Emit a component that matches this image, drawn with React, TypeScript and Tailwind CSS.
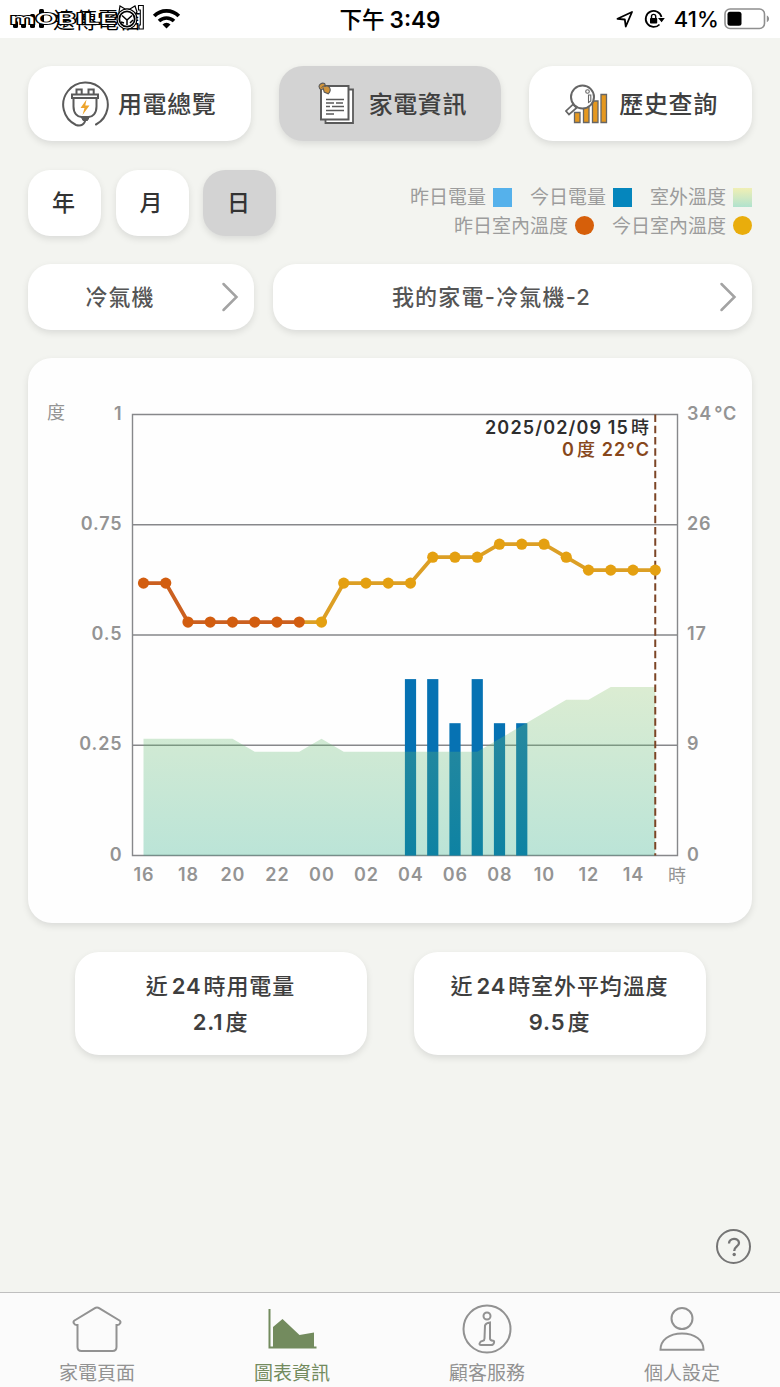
import type { ReactNode } from "react";
import clsx from "clsx";

const START_X = 143.5;
const STEP = 22.25;
const TOP = 414.5;
const BOTTOM = 855.5;
const HEIGHT = BOTTOM - TOP;
const MAX_TEMP = 34;

const INDOOR = [21, 21, 18, 18, 18, 18, 18, 18, 18, 21, 21, 21, 21, 23, 23, 23, 24, 24, 24, 23, 22, 22, 22, 22];
const OUTDOOR = [9, 9, 9, 9, 9, 8, 8, 8, 9, 8, 8, 8, 8, 8, 8, 8, 9, 10, 11, 12, 12, 13, 13, 13];
const USAGE = [0, 0, 0, 0, 0, 0, 0, 0, 0, 0, 0, 0, 0.4, 0.4, 0.3, 0.4, 0.3, 0.3, 0, 0, 0, 0, 0, 0];
const HOURS = ["16", "18", "20", "22", "00", "02", "04", "06", "08", "10", "12", "14"];
const LEFT_AXIS = ["1", "0.75", "0.5", "0.25", "0"];
const RIGHT_AXIS = ["34", "26", "17", "9", "0"];

// points before midnight belong to yesterday
const YESTERDAY_COUNT = 8;

const px = (i: number) => START_X + i * STEP;
const tempY = (t: number) => BOTTOM - (t / MAX_TEMP) * HEIGHT;
const toPoints = (values: number[], offset = 0) =>
  values.map((v, i) => `${px(i + offset)},${tempY(v)}`).join(" ");

function StatusBar() {
  return (
    <header className="relative flex h-[38px] items-center justify-between bg-white pl-[9px] pr-[10px] text-black">
      <div className="flex items-center">
        <svg width="136" height="34" viewBox="9 2 136 34">
          <rect x="13" y="21" width="5" height="7" rx="1.5" />
          <rect x="21" y="18" width="5" height="10" rx="1.5" />
          <rect x="30" y="14" width="5" height="14" rx="1.5" />
          <rect x="39" y="9" width="5" height="19" rx="1.5" />
          <text x="53" y="28" fontSize="22" textLength="88" className="font-['Noto_Sans_CJK_TC',sans-serif]">
            遠傳電信
          </text>
          <text
            x="10"
            y="23.500"
            fontSize="14"
            fontWeight="500"
            textLength="107"
            lengthAdjust="spacingAndGlyphs"
            fill="#fff"
            stroke="#000"
            strokeWidth="1.800"
            paintOrder="stroke"
            className="font-['Inter',sans-serif]"
          >
            mOBILE
          </text>
          <path d="M119 12l1-6 5 3h5l5-3 2 6-2 2-16 1z" fill="#fff" stroke="#000" strokeWidth="1.200" />
          <circle cx="127" cy="19" r="10" fill="#fff" stroke="#000" strokeWidth="1.200" />
          <circle cx="127" cy="19" r="7.700" fill="#fff" stroke="#000" strokeWidth="1.800" />
          <path d="M122 15.500l5 4.500 5-4.500M127 20v5M121 22l3 1M133 20l-3 3" fill="none" stroke="#000" strokeWidth="1.500" />
          <path d="M138.500 5.500h4.800v23.500h-4.300v-4h1.300V10h-1.800z" fill="#fff" stroke="#000" strokeWidth="1.100" />
        </svg>
        <svg className="mt-[-2px] ml-[7px]" width="29" height="21" viewBox="0 0 29 21">
          <path d="M2.200 8a17.500 17.500 0 0 1 24.600 0" fill="none" stroke="#000" strokeWidth="3.800" />
          <path d="M7 13a10.800 10.800 0 0 1 15 0" fill="none" stroke="#000" strokeWidth="3.600" />
          <path d="M10.500 16.500a5.700 5.700 0 0 1 8 0l-4 4z" />
        </svg>
      </div>
      <div className="absolute inset-x-0 top-px flex h-[38px] items-center justify-center gap-[5px] text-[22.500px] font-semibold">
        <span className="font-medium">下午</span>
        <span>3:49</span>
      </div>
      <div className="flex items-center">
        <svg width="18" height="18" viewBox="0 0 18 18" fill="none" stroke="#000" strokeWidth="1.800" strokeLinejoin="round">
          <path d="M1.500 8.800 16 2 9.800 16.500 8.800 9.500z" />
        </svg>
        <svg className="ml-2.5" width="21" height="20" viewBox="0 0 21 20">
          <path d="M15.500 15.500A8 8 0 1 1 17.500 8" fill="none" stroke="#000" strokeWidth="1.800" />
          <path d="M14 9h6.800l-3.200 4.300z" />
          <rect x="6" y="9" width="7.200" height="5.500" rx="0.800" />
          <path d="M7.500 9.500V7.500a2.100 2.100 0 0 1 4.200 0v2" fill="none" stroke="#000" strokeWidth="1.400" />
        </svg>
        <span className="mt-px ml-[9px] text-[22px] font-[450] tracking-[0.1px]">41%</span>
        <svg className="ml-[5px]" width="46" height="22" viewBox="0 0 46 22">
          <rect x="1" y="1" width="39.500" height="19.500" rx="5" fill="none" stroke="#8f8f8f" strokeWidth="1.600" />
          <rect x="3.500" y="3.800" width="14" height="14" rx="2.500" />
          <path d="M42.800 7.500c3 1.200 3 5.500 0 6.700z" fill="#8f8f8f" />
        </svg>
      </div>
    </header>
  );
}

function PlugIcon() {
  return (
    <svg width="48" height="48" viewBox="0 0 48 48" fill="none" stroke="#5a5a5a" strokeWidth="2">
      <path d="M35 44.500A22.300 22.300 0 1 0 15 45c5 1.500 9-.500 9.500-6" strokeLinecap="round" />
      <path d="M12.500 18v8.500c0 7 4 10.500 8 10.500h7c4 0 8-3.500 8-10.500V18" />
      <rect x="11" y="14.500" width="26" height="3.500" />
      <path d="M15.500 14.500V9.500h5.200v5M27.500 14.500V9.500h5.200v5" />
      <path d="M20.500 37.500h7.500l-1.500 3h-4.500z" fill="#5a5a5a" strokeWidth="1" />
      <path d="M25.500 19.500l-6 8.500h4l-2 7 7-9.500h-4.200z" fill="#eda42b" stroke="none" />
    </svg>
  );
}

function NoteIcon() {
  return (
    <svg width="38" height="44" viewBox="0 0 38 44" stroke="#5a5a5a">
      <path d="M7.500 7.500h27.500v33.500H7.500z" fill="#fff" strokeWidth="1.800" />
      <path d="M3 4h27.500v33.500H3z" fill="#fff" strokeWidth="2" />
      <path d="M8 17.500h18M8 21h8M18 21h7M8 24.500h4M14 24.500h12M8 28.500h18M8 32h8" strokeWidth="1.500" />
      {/* push pin */}
      <path
        d="M1 4.500C1 2 4 .500 6.500 1.500c1 .800.600 2.300-.200 3 1.500-.800 4-.700 5.200 1 1.500 2.300.500 4.500-1.300 6.300l-4-1.800-1-3.500C3.500 8.500 1.500 7.500 1 4.500z"
        fill="#d0933a"
        strokeWidth="1.100"
      />
      <path d="M3.500 5.500l3-2" strokeWidth="1" />
    </svg>
  );
}

function HistoryIcon() {
  return (
    <svg width="43" height="40" viewBox="0 0 43 40" stroke="#666" strokeWidth="1.300">
      <g fill="#e5981f">
        <path d="M9.500 28.500h5.500v10h-5.500zM18.500 21h5.500v17.500h-5.500zM27.500 17h5.500v21.500h-5.500zM36 10.500h5.500v28H36z" />
      </g>
      <path d="M8 20.500l3.500 3.500-7.500 6.500-3-3.500z" fill="#fff" strokeWidth="1.700" />
      <circle cx="17.500" cy="13" r="11.500" fill="#fff" strokeWidth="2" />
      <circle cx="22.500" cy="7.500" r="1.800" fill="#fff" strokeWidth="1.100" />
      <path d="M23.500 11h2.300v6l-2.300 1.500z" fill="#fff" strokeWidth="1.100" />
    </svg>
  );
}

function TopTab({ icon, label, active }: { icon: ReactNode; label: string; active?: boolean }) {
  return (
    <button
      className={clsx(
        "flex h-[75px] flex-1 items-center rounded-3xl text-[24px] font-medium tracking-[0.6px] text-[#404040] shadow-[0_3px_7px_rgba(0,0,0,0.1)]",
        active ? "bg-[#d3d3d3]" : "bg-white"
      )}
    >
      <span className="flex w-[90px] shrink-0 justify-end">{icon}</span>
      <span className="flex-1 pt-0.5 text-left">{label}</span>
    </button>
  );
}

function PeriodButton({ label, active }: { label: string; active?: boolean }) {
  return (
    <button
      className={clsx(
        "h-[66px] w-[73px] rounded-[22px] pr-0.5 text-[23px] font-medium text-[#333] shadow-[0_3px_7px_rgba(0,0,0,0.1)]",
        active ? "bg-[#d3d3d3]" : "bg-white"
      )}
    >
      {label}
    </button>
  );
}

function LegendItem({ label, swatch }: { label: string; swatch: string }) {
  return (
    <div className="flex items-center gap-[7px]">
      <span className="pt-0.5">{label}</span>
      <i className={clsx("block size-[19px]", swatch)} />
    </div>
  );
}

function Picker({ label, className }: { label: string; className: string }) {
  return (
    <button
      className={clsx(
        "flex h-[66px] items-center rounded-[23px] bg-white pr-[15px] text-[22px] font-medium tracking-[1.2px] text-[#555] shadow-[0_3px_7px_rgba(0,0,0,0.1)]",
        className
      )}
    >
      <span className="flex-1 pr-[9px] text-center">{label}</span>
      <svg width="18" height="30" viewBox="0 0 18 30" fill="none" stroke="#a3a3a3" strokeWidth="2.500">
        <path d="M2.500 2 15.500 15 2.500 28" strokeLinecap="round" />
      </svg>
    </button>
  );
}

function UsageChart() {
  const last = px(INDOOR.length - 1);

  return (
    <section className="mt-7 h-[565px] rounded-3xl bg-[#fefefe] shadow-[0_3px_7px_rgba(0,0,0,0.1)]">
      <svg width="724" height="565" viewBox="28 358 724 565" fontSize="18" fontWeight="600" fill="#949494">
        <defs>
          <linearGradient id="outdoor" gradientUnits="userSpaceOnUse" x1="0" y1="687" x2="0" y2="855">
            <stop offset="0" stopColor="#8ac36c" />
            <stop offset="1" stopColor="#20a87d" />
          </linearGradient>
        </defs>

        <g stroke="#87888b" strokeWidth="1.400" fill="none">
          <path d="M132.500 414.500H677.500V855.500H132.500z" />
          <path d="M132.500 524.700H677.500M132.500 635H677.500M132.500 745.300H677.500" />
        </g>

        {USAGE.map((v, i) =>
          v > 0 ? (
            <rect key={i} x={px(i) - 5.6} y={BOTTOM - v * HEIGHT} width="11.200" height={v * HEIGHT} fill="#0672b3" />
          ) : null
        )}
        <polygon
          points={`${px(0)},${BOTTOM} ${toPoints(OUTDOOR)} ${last},${BOTTOM}`}
          fill="url(#outdoor)"
          fillOpacity="0.3"
        />

        <line x1={last} y1={TOP} x2={last} y2={BOTTOM} stroke="#7c4526" strokeWidth="2" strokeDasharray="7.500 3.750" />

        <polyline
          points={toPoints(INDOOR.slice(YESTERDAY_COUNT - 1), YESTERDAY_COUNT - 1)}
          fill="none"
          stroke="#dc9f25"
          strokeWidth="3.800"
        />
        <polyline points={toPoints(INDOOR.slice(0, YESTERDAY_COUNT))} fill="none" stroke="#cb6020" strokeWidth="3.800" />
        {INDOOR.map((t, i) => (
          <circle key={i} cx={px(i)} cy={tempY(t)} r="5.600" fill={i < YESTERDAY_COUNT ? "#d25d0f" : "#e4a011"} />
        ))}

        <text x="47" y="419" fontWeight="400">
          度
        </text>
        <g letterSpacing="0.900">
          {LEFT_AXIS.map((t, i) => (
            <text key={i} x="122.500" y={419.5 + i * 110.25} textAnchor="end">
              {t}
            </text>
          ))}
          {RIGHT_AXIS.map((t, i) => (
            <text key={i} x="687" y={419.5 + i * 110.25}>
              {t}
              {i === 0 && <tspan dx="2.500">°C</tspan>}
            </text>
          ))}
          {HOURS.map((h, i) => (
            <text key={h} x={px(i * 2) + 0.4} y="881" textAnchor="middle">
              {h}
            </text>
          ))}
          <text x="668" y="881.500" fontWeight="400">
            時
          </text>
          <text x="485" y="433.500" textLength="165" fill="#2e2e2e">
            2025/02/09 15<tspan dx="2" fontWeight="500">時</tspan>
          </text>
          <text x="562" y="455.500" textLength="88" fill="#87471b">
            0<tspan dx="2" fontWeight="500">度</tspan> 22°C
          </text>
        </g>
      </svg>
    </section>
  );
}

function SummaryCard({ title, value }: { title: ReactNode; value: ReactNode }) {
  return (
    <div className="flex h-[103px] w-[292px] flex-col items-center rounded-3xl bg-white pt-4 text-[22px] leading-9 font-medium tracking-[0.9px] text-[#3e3e3e] shadow-[0_3px_7px_rgba(0,0,0,0.1)]">
      <div>{title}</div>
      <div>{value}</div>
    </div>
  );
}

const NAV_ITEMS = [
  {
    label: "家電頁面",
    icon: (
      <path d="M22.500 2.300q2.500-1.600 5 0L47.500 14.500q1.500 1 .700 2.700-.800 2-3 1.800h-.700V41q0 4-4 4h-31q-4 0-4-4V19h-.700q-2.200.200-3-1.800-.800-1.700.700-2.700z" />
    ),
  },
  {
    label: "圖表資訊",
    icon: (
      <>
        <path d="M2.500 3v38.500H49.500" />
        <path d="M6 41V21l9.500-8 17 16 14.500-2.500V41z" fill="currentColor" stroke="none" />
      </>
    ),
    active: true,
  },
  {
    label: "顧客服務",
    icon: (
      <>
        <circle cx="25" cy="23" r="23.500" />
        <circle cx="25" cy="10" r="3.500" />
        <path d="M23 19.500q.800-2.500 5-3v16q0 2 3 2.200 1.500.200 1 2-.500 2.300-3 2.300H19q-2 0-1.300-2 .600-2 3.300-2.300 1.500-.200 1.500-2.200z" />
      </>
    ),
  },
  {
    label: "個人設定",
    icon: (
      <>
        <circle cx="25" cy="12.500" r="10.500" />
        <path d="M3.500 43.800C3.500 34 12 27.500 25 27.500s21.500 6.500 21.500 16.300z" />
      </>
    ),
  },
];

export default function App() {
  return (
    <div className="flex h-[1387px] w-[780px] flex-col overflow-hidden bg-[#f3f4f0] font-['Inter','Noto_Sans_CJK_TC',sans-serif]">
      <StatusBar />

      <main className="flex-1 px-7 pt-7">
        <div className="flex gap-7">
          <TopTab icon={<div className="mr-[9px]"><PlugIcon /></div>} label="用電總覽" />
          <TopTab icon={<div className="mr-[13px]"><NoteIcon /></div>} label="家電資訊" active />
          <TopTab icon={<div className="mr-[11px]"><HistoryIcon /></div>} label="歷史查詢" />
        </div>

        <div className="mt-[29px] flex h-[66px] justify-between">
          <div className="flex gap-[14.500px]">
            <PeriodButton label="年" />
            <PeriodButton label="月" />
            <PeriodButton label="日" active />
          </div>
          <div className="flex flex-col items-end pt-[13px] text-[19px] leading-[26.500px] text-[#9c9c9c]">
            <div className="flex gap-[18px]">
              <LegendItem label="昨日電量" swatch="bg-[#55b1eb]" />
              <LegendItem label="今日電量" swatch="bg-[#0586bd]" />
              <LegendItem label="室外溫度" swatch="bg-linear-to-b from-[#f0efb4] to-[#b0e2ce]" />
            </div>
            <div className="flex gap-[18px]">
              <LegendItem label="昨日室內溫度" swatch="rounded-full bg-[#d65f0a]" />
              <LegendItem label="今日室內溫度" swatch="rounded-full bg-[#e9ad0c]" />
            </div>
          </div>
        </div>

        <div className="mt-7 flex gap-[19px]">
          <Picker label="冷氣機" className="w-[226px]" />
          <Picker label="我的家電-冷氣機-2" className="flex-1" />
        </div>

        <UsageChart />

        <div className="mt-[29px] flex justify-center gap-[47px]">
          <SummaryCard
            title={<>近<span className="ml-[3px] mr-[2px] font-semibold">24</span>時用電量</>}
            value={<><span className="mr-[2px] font-semibold">2.1</span>度</>}
          />
          <SummaryCard
            title={<>近<span className="ml-[3px] mr-[2px] font-semibold">24</span>時室外平均溫度</>}
            value={<><span className="mr-[2px] font-semibold">9.5</span>度</>}
          />
        </div>

        <div className="mt-[174px] mr-px flex justify-end">
          <button className="flex size-[35px] items-center justify-center rounded-full border-2 border-[#757575] text-[#757575]">
            <svg width="14" height="20" viewBox="0 0 14 20" fill="none" stroke="currentColor" strokeWidth="2.300">
              <path d="M2 6.500C2 .500 12 .500 12 6c0 3.500-4.800 3.500-4.800 8" />
              <circle cx="7.200" cy="17.500" r="1.700" fill="currentColor" stroke="none" />
            </svg>
          </button>
        </div>
      </main>

      <nav className="grid h-[95px] grid-cols-4 border-t border-[#bfbfbf] bg-[#fbfbfb]">
        {NAV_ITEMS.map((item) => (
          <a
            key={item.label}
            className={clsx(
              "flex flex-col items-center pt-[13px] pr-px text-[19px] leading-6",
              item.active ? "text-[#738b5e]" : "text-[#929292]"
            )}
          >
            <svg
              className="overflow-visible"
              width="50"
              height="46"
              viewBox="0 0 50 46"
              fill="none"
              stroke="currentColor"
              strokeWidth="2"
            >
              {item.icon}
            </svg>
            <span className="mt-[10px]">{item.label}</span>
          </a>
        ))}
      </nav>
    </div>
  );
}
